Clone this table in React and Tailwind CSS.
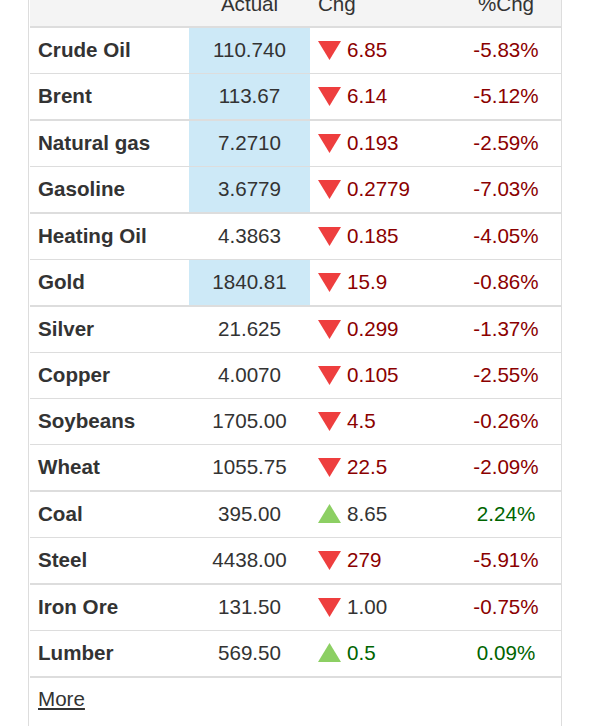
const rows = [
  { name: "Crude Oil", actual: "110.740", chg: "6.85", pct: "-5.83%", up: false, hl: true },
  { name: "Brent", actual: "113.67", chg: "6.14", pct: "-5.12%", up: false, hl: true, thick: true },
  { name: "Natural gas", actual: "7.2710", chg: "0.193", pct: "-2.59%", up: false, hl: true },
  { name: "Gasoline", actual: "3.6779", chg: "0.2779", pct: "-7.03%", up: false, hl: true, thick: true },
  { name: "Heating Oil", actual: "4.3863", chg: "0.185", pct: "-4.05%", up: false },
  { name: "Gold", actual: "1840.81", chg: "15.9", pct: "-0.86%", up: false, hl: true, thick: true },
  { name: "Silver", actual: "21.625", chg: "0.299", pct: "-1.37%", up: false },
  { name: "Copper", actual: "4.0070", chg: "0.105", pct: "-2.55%", up: false },
  { name: "Soybeans", actual: "1705.00", chg: "4.5", pct: "-0.26%", up: false },
  { name: "Wheat", actual: "1055.75", chg: "22.5", pct: "-2.09%", up: false, thick: true },
  { name: "Coal", actual: "395.00", chg: "8.65", pct: "2.24%", up: true, plain: true },
  { name: "Steel", actual: "4438.00", chg: "279", pct: "-5.91%", up: false, thick: true },
  { name: "Iron Ore", actual: "131.50", chg: "1.00", pct: "-0.75%", up: false, plain: true },
  { name: "Lumber", actual: "569.50", chg: "0.5", pct: "0.09%", up: true, thick: true },
];

const Arrow = ({ up }) =>
  up ? (
    <svg width="23" height="19" viewBox="0 0 23 19" className="shrink-0 mb-[3px]">
      <polygon points="11.5,0 23,19 0,19" fill="#8ccf63" />
    </svg>
  ) : (
    <svg width="23" height="19" viewBox="0 0 23 19" className="shrink-0 mb-[1px]">
      <polygon points="0,0 23,0 11.5,19" fill="#ee3e3e" />
    </svg>
  );

const Row = ({ r }) => {
  const chgColor = r.plain ? "text-[#333]" : r.up ? "text-[#006400]" : "text-[#8b0000]";
  const pctColor = r.up ? "text-[#006400]" : "text-[#8b0000]";
  return (
    <div
      className={
        "flex items-stretch text-[20.6px] " +
        (r.thick ? "h-[47px] border-b-2 border-[#ddd]" : "h-[46px] border-b border-[#ddd]")
      }
    >
      <div className="w-[159px] flex items-center pl-2 font-bold text-[#333]">{r.name}</div>
      <div
        className={
          "w-[121px] flex items-center justify-center text-[#333] " + (r.hl ? "bg-[#cde9f7]" : "")
        }
      >
        {r.actual}
      </div>
      <div className={"w-[141px] flex items-center gap-[6px] pl-2 " + chgColor}>
        <Arrow up={r.up} />
        <span>{r.chg}</span>
      </div>
      <div className={"flex-1 flex items-center justify-center " + pctColor}>{r.pct}</div>
    </div>
  );
};

export default function App() {
  return (
    <div
      className="w-[601px] h-[726px] overflow-hidden bg-white flex"
      style={{ fontFamily: '"Liberation Sans", Arial, sans-serif' }}
    >
      <div className="ml-[28px] w-[534px] h-[726px] border-x border-[#ddd] pl-px flex flex-col">
        <div className="-mt-[18px]">
          <div className="flex h-[46px] items-center text-[20.6px] text-[#333] bg-[#f4f4f4] border-b-2 border-[#ddd]">
            <div className="w-[159px]"></div>
            <div className="w-[121px] text-center">Actual</div>
            <div className="w-[141px] pl-2">Chg</div>
            <div className="flex-1 text-center">%Chg</div>
          </div>
          {rows.map((r) => (
            <Row key={r.name} r={r} />
          ))}
          <div className="pl-2 pt-[6px] text-[20.6px] text-[#333]">
            <a href="#" className="underline">More</a>
          </div>
        </div>
      </div>
    </div>
  );
}
